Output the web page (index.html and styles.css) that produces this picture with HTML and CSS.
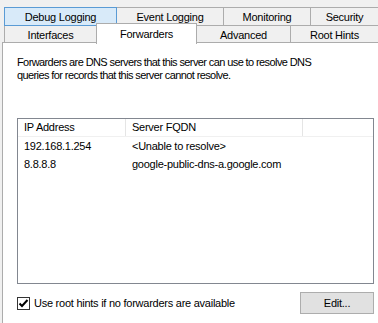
FILE: index.html
```html
<!DOCTYPE html>
<html lang="en">
<head>
    <meta charset="UTF-8">
    <title>DNS Server Properties - Forwarders</title>
    <link rel="stylesheet" href="styles.css">
</head>
<body>
    <div class="tabs">
        <div class="tab-row">
            <div class="tab tab-hover w-debug">Debug Logging</div>
            <div class="tab w-event">Event Logging</div>
            <div class="tab w-monitor">Monitoring</div>
            <div class="tab w-security">Security</div>
        </div>
        <div class="tab-row row-front">
            <div class="tab w-interfaces">Interfaces</div>
            <div class="tab tab-selected w-forwarders">Forwarders</div>
            <div class="tab w-advanced">Advanced</div>
            <div class="tab w-roothints">Root Hints</div>
        </div>
    </div>

    <div class="panel">
        <p class="intro">Forwarders are DNS servers that this server can use to resolve DNS queries for records that this server cannot resolve.</p>

        <div class="list">
            <div class="list-header">
                <div class="col col-ip">IP Address</div>
                <div class="col col-fqdn">Server FQDN</div>
            </div>
            <div class="list-row">
                <div class="col col-ip">192.168.1.254</div>
                <div class="col col-fqdn">&lt;Unable to resolve&gt;</div>
            </div>
            <div class="list-row">
                <div class="col col-ip">8.8.8.8</div>
                <div class="col col-fqdn">google-public-dns-a.google.com</div>
            </div>
        </div>

        <div class="footer">
            <label class="check">
                <span class="check-box">
                    <svg width="11" height="11" viewBox="0 0 11 11">
                        <path d="M1.5 5.5 L4 8 L9.5 2" fill="none" stroke="#000" stroke-width="2"/>
                    </svg>
                </span>
                Use root hints if no forwarders are available
            </label>
            <button class="btn">Edit...</button>
        </div>
    </div>
</body>
</html>
```

FILE: styles.css
```css
body {
    margin: 0;
    width: 378px;
    height: 323px;
    overflow: hidden;
    background-color: #f0f0f0;
    font-family: "Liberation Sans", Arial, sans-serif;
    font-size: 11px;
    letter-spacing: -0.25px;
    color: #000;
}

.tabs {
    padding: 7px 0 0 4px;
}

.tab-row {
    display: flex;
    height: 19px;
}

.row-front {
    height: 17px;
    margin-top: -1px;
}

.tab {
    box-sizing: border-box;
    flex: none;
    display: flex;
    align-items: center;
    justify-content: center;
    border: 1px solid #acacac;
    margin-right: -1px;
    background-color: #f0f0f0;
}

.row-front .tab {
    border-bottom: none;
    padding-top: 1px;
}

.tab-hover {
    background-color: #d8eaf9;
    border-color: #5a9bd5;
    position: relative;
    z-index: 1;
}

.tab-selected {
    position: relative;
    z-index: 2;
    margin-top: -2px;
    height: 21px;
    background-color: #fff;
    padding-bottom: 2px;
}

.w-debug { width: 113px; }
.w-event { width: 108px; }
.w-monitor { width: 88px; }
.w-security { width: 69px; }
.w-interfaces { width: 93px; }
.w-forwarders { width: 101px; }
.w-advanced { width: 95px; }
.w-roothints { width: 89px; }

.panel {
    margin-left: 2px;
    height: 281px;
    background-color: #fff;
    border-top: 1px solid #acacac;
    border-left: 1px solid #acacac;
    padding: 0 5px 0 14px;
}

.intro {
    margin: 0;
    padding-top: 13px;
    line-height: 13px;
    width: 326px;
    letter-spacing: -0.6px;
}

.list {
    box-sizing: border-box;
    margin-top: 36px;
    width: 357px;
    height: 166px;
    border: 1px solid #828790;
}

.list-header {
    display: flex;
    height: 17px;
    border-bottom: 1px solid #f0f0f0;
}

.list-header .col {
    border-right: 1px solid #e5e5e5;
    line-height: 17px;
}

.list-row {
    display: flex;
    height: 18px;
    line-height: 18px;
}

.col {
    box-sizing: border-box;
    padding-left: 6px;
    white-space: nowrap;
}

.col-ip {
    width: 108px;
}

.col-fqdn {
    width: 177px;
}

.footer {
    display: flex;
    align-items: center;
    justify-content: space-between;
    margin-top: 8px;
    width: 357px;
}

.check {
    display: flex;
    align-items: center;
    gap: 4px;
}

.check-box {
    box-sizing: border-box;
    width: 13px;
    height: 13px;
    border: 1px solid #333;
    background-color: #fff;
    display: flex;
    align-items: center;
    justify-content: center;
}

.btn {
    box-sizing: border-box;
    width: 74px;
    height: 22px;
    border: 1px solid #adadad;
    background-color: #e1e1e1;
    font-family: inherit;
    font-size: 11px;
    letter-spacing: inherit;
    color: #000;
    padding: 0;
}
```
